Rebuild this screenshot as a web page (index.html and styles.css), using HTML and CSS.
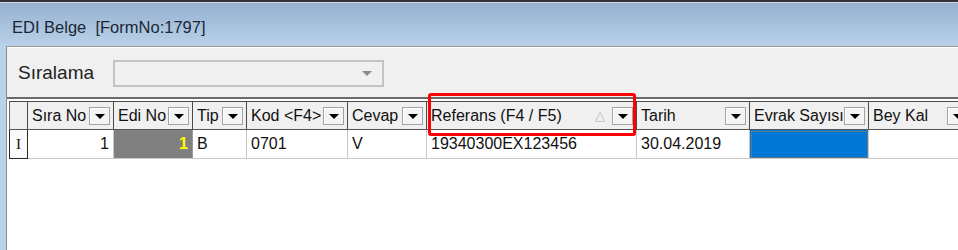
FILE: index.html
```html
<!DOCTYPE html>
<html lang="tr">
<head>
    <meta charset="UTF-8">
    <title>EDI Belge</title>
    <link rel="stylesheet" href="styles.css">
</head>
<body>
    <div class="screen">
        <div class="topstrip"></div>
        <div class="titlebar">EDI Belge&nbsp; [FormNo:1797]</div>
        <div class="frame">
            <div class="client">
                <div class="sortbar">
                    <span class="sort-label">Sıralama</span>
                    <div class="combo"><span class="combo-arrow"></span></div>
                </div>

                <div class="grid-wrap">
                    <table class="grid">
                        <colgroup>
                            <col class="c-ind">
                            <col class="c-sira">
                            <col class="c-edi">
                            <col class="c-tip">
                            <col class="c-kod">
                            <col class="c-cevap">
                            <col class="c-ref">
                            <col class="c-tarih">
                            <col class="c-evrak">
                            <col class="c-bey">
                        </colgroup>
                        <thead>
                            <tr>
                                <th class="ind"></th>
                                <th><div class="hcell"><span>Sıra No</span><span class="dd"></span></div></th>
                                <th><div class="hcell"><span>Edi No</span><span class="dd"></span></div></th>
                                <th><div class="hcell"><span>Tip</span><span class="dd"></span></div></th>
                                <th><div class="hcell"><span>Kod &lt;F4&gt;</span><span class="dd"></span></div></th>
                                <th><div class="hcell"><span>Cevap</span><span class="dd"></span></div></th>
                                <th class="marked"><div class="hcell"><span>Referans (F4 / F5)</span><span class="sort">△</span><span class="dd"></span></div></th>
                                <th><div class="hcell"><span>Tarih</span><span class="dd"></span></div></th>
                                <th><div class="hcell"><span>Evrak Sayısı</span><span class="dd"></span></div></th>
                                <th><div class="hcell"><span>Bey Kal</span><span class="dd"></span></div></th>
                            </tr>
                        </thead>
                        <tbody>
                            <tr>
                                <td class="ind"><span class="ibeam">I</span></td>
                                <td class="num">1</td>
                                <td class="num dim">1</td>
                                <td>B</td>
                                <td>0701</td>
                                <td>V</td>
                                <td>19340300EX123456</td>
                                <td>30.04.2019</td>
                                <td class="selected"></td>
                                <td></td>
                            </tr>
                        </tbody>
                    </table>
                </div>
            </div>
        </div>
    </div>
</body>
</html>
```

FILE: styles.css
```css
* {
    margin: 0;
    padding: 0;
    box-sizing: border-box;
}

body {
    font-family: 'Liberation Sans', Arial, sans-serif;
    background: #ffffff;
    color: #000;
    width: 958px;
    height: 250px;
    overflow: hidden;
}

.screen {
    height: 250px;
    display: flex;
    flex-direction: column;
}

.topstrip {
    height: 3px;
    background: linear-gradient(#2e2e2e 0, #3a3a3a 2px, #cfdbe8 2px);
}

.titlebar {
    height: 43px;
    background: linear-gradient(#96b1cf 0%, #a9c3de 55%, #b9d2ea 100%);
    color: #1c2636;
    font-size: 16.5px;
    padding: 15px 0 0 12px;
    white-space: pre;
}

.frame {
    flex: 1;
    background: #b9d3ec;
    padding-left: 6px;
    display: flex;
}

.client {
    flex: 1;
    background: #fff;
    border-left: 1px solid #8c8c8c;
    border-top: 1px solid #9a9a9a;
    overflow: hidden;
}

.sortbar {
    height: 50px;
    background: #f0f0f0;
    border-top: 1px solid #fff;
    display: flex;
    align-items: center;
    padding-left: 11px;
}

.sort-label {
    font-size: 19px;
    color: #222;
    width: 95px;
    padding-top: 1px;
}

.combo {
    width: 271px;
    height: 27px;
    border: 2px solid #c4c4c4;
    background: #f0f0f0;
    display: flex;
    align-items: center;
    justify-content: flex-end;
    padding-right: 10px;
    margin-top: 1px;
}

.combo-arrow {
    width: 0;
    height: 0;
    border-left: 5px solid transparent;
    border-right: 5px solid transparent;
    border-top: 5px solid #8a8a8a;
}

.grid-wrap {
    border-top: 2px solid #6a6a6a;
    padding: 2px 0 0 2px;
    background: #fff;
}

.grid {
    border-collapse: collapse;
    table-layout: fixed;
    width: 962px;
    font-size: 16px;
}

.c-ind { width: 18px; }
.c-sira { width: 86px; }
.c-edi { width: 79px; }
.c-tip { width: 54px; }
.c-kod { width: 101px; }
.c-cevap { width: 79px; }
.c-ref { width: 210px; }
.c-tarih { width: 113px; }
.c-evrak { width: 119px; }
.c-bey { width: 103px; }

.grid th {
    height: 28px;
    background: #f0f0f0;
    border: 1px solid #4a4a4a;
    border-bottom-color: #555;
    font-weight: normal;
    text-align: left;
    padding: 0 3px 0 4px;
    position: relative;
    color: #111;
}

.grid th.ind {
    border-left-color: #6a6a6a;
}

.hcell {
    display: flex;
    align-items: center;
    justify-content: space-between;
    white-space: nowrap;
    overflow: hidden;
}

.hcell span:first-child {
    flex: 1;
    overflow: hidden;
}

.dd {
    flex: none;
    width: 21px;
    height: 18px;
    border: 1px solid #a4a4a4;
    background: #f4f4f4;
    box-shadow: inset 1px 1px 0 #fff;
    position: relative;
}

.dd::after {
    content: '';
    position: absolute;
    left: 5px;
    top: 6px;
    border-left: 5px solid transparent;
    border-right: 5px solid transparent;
    border-top: 5px solid #000;
}

.sort {
    flex: none;
    color: #b4b4b4;
    font-size: 13px;
    margin-right: 7px;
}

.marked::after {
    content: '';
    position: absolute;
    top: -9px;
    left: 1px;
    right: 0;
    bottom: -7px;
    border: 3px solid #f00;
    border-radius: 3px;
    pointer-events: none;
}

.grid td {
    height: 29px;
    border-right: 1px solid #c8c8c8;
    border-bottom: 1px solid #c8c8c8;
    padding: 0 4px;
    white-space: nowrap;
    overflow: hidden;
    color: #111;
}

.grid td.ind {
    border: 1px solid #2a2a2a;
    background: #fafafa;
    text-align: center;
    padding: 0;
}

.ibeam {
    font-family: 'Liberation Serif', serif;
    font-size: 15px;
}

.grid td.num {
    text-align: right;
}

.grid td.dim {
    background: #808080;
    color: #ffff00;
    font-weight: bold;
    border-right-color: #9a9a9a;
}

.grid td.selected {
    background: #0078d7;
    outline: 1px dotted #b87a3c;
    outline-offset: -2px;
}
```
